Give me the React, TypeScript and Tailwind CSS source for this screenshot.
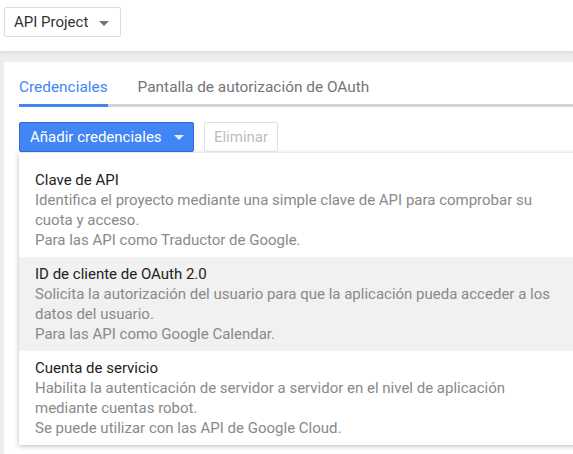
const font = { fontFamily: 'Roboto, "Liberation Sans", sans-serif' }

const options = [
  {
    title: 'Clave de API',
    lines: [
      'Identifica el proyecto mediante una simple clave de API para comprobar su cuota y acceso.',
      'Para las API como Traductor de Google.',
    ],
  },
  {
    title: 'ID de cliente de OAuth 2.0',
    lines: [
      'Solicita la autorización del usuario para que la aplicación pueda acceder a los datos del usuario.',
      'Para las API como Google Calendar.',
    ],
    active: true,
  },
  {
    title: 'Cuenta de servicio',
    lines: [
      'Habilita la autenticación de servidor a servidor en el nivel de aplicación mediante cuentas robot.',
      'Se puede utilizar con las API de Google Cloud.',
    ],
  },
]

const Caret = ({ className }: { className: string }) => (
  <svg width="10" height="5" viewBox="0 0 10 5" className={className}>
    <path d="M0 0h10L5 5z" fill="currentColor" />
  </svg>
)

export default function App() {
  return (
    <div className="h-[454px] w-[573px] overflow-hidden bg-white" style={font}>
      <header className="h-[51px] pl-1 pt-[7px]">
        <button className="flex h-[30px] w-[117px] items-center gap-[11px] rounded-[2px] border border-[#dcdcdc] bg-white pl-[9px] text-[15px] text-[#333]">
          API Project
          <Caret className="mt-[2px] text-[#757575]" />
        </button>
      </header>

      <main className="h-[403px] bg-[#eeeeee] pl-1 pt-[11px] shadow-[inset_0_4px_4px_-2px_rgba(0,0,0,0.08)]">
        <section className="h-full overflow-hidden bg-white pl-[15px]">
          <nav className="flex w-[600px] gap-[30px] border-b-[3px] border-[#d4d4d4] pt-[15px] text-[15.4px] leading-5">
            <div className="-mb-[3px] border-b-[3px] border-[#4285f4] pb-[7px] text-[#4285f4]">Credenciales</div>
            <div className="pb-[7px] text-[#757575]">Pantalla de autorización de OAuth</div>
          </nav>

          <div className="mt-[15px] flex gap-[10px]">
            <button className="flex h-[30px] w-[175px] items-center gap-[12px] rounded-[2px] border border-[#3367d6] bg-[#4285f4] pl-[10px] text-[15px] text-white">
              Añadir credenciales
              <Caret className="mt-[1px] text-white/85" />
            </button>
            <button className="h-[30px] w-[74px] rounded-[2px] border border-[#e0e0e0] text-[15px] text-[#bdbdbd]">
              Eliminar
            </button>
          </div>

          <ul className="mt-[1px] w-[600px] bg-white pt-[10px] text-[15px] leading-5 shadow-[0_1px_5px_rgba(0,0,0,0.28)]">
            {options.map((o) => (
              <li key={o.title} className={`py-[7px] pl-4 ${o.active ? 'bg-[#f1f1f1]' : ''}`}>
                <div className="text-[#222]">{o.title}</div>
                <div className="max-w-[522px] text-[#898989]">
                  {o.lines.map((l) => (
                    <p key={l}>{l}</p>
                  ))}
                </div>
              </li>
            ))}
          </ul>
        </section>
      </main>
    </div>
  )
}
